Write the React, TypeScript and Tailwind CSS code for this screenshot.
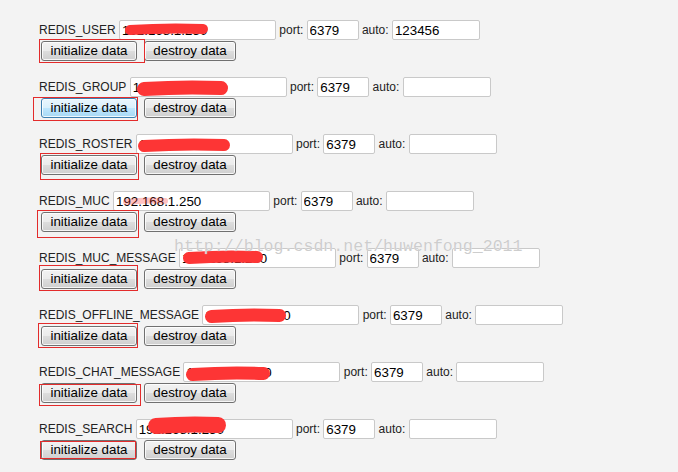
import React from 'react';

type Row = {
  label: string;
  auto?: string;
  // scribble over the host field: x1, x2, yTop, yBottom (relative to the input box)
  scribble: [number, number, number, number];
  faint?: boolean;
  hover?: boolean;
  box: string;
};

const rows: Row[] = [
  { label: 'REDIS_USER', auto: '123456', scribble: [6, 89, 4, 14], box: 'left-0 -top-[2px] w-[106px] h-[24px]' },
  { label: 'REDIS_GROUP', scribble: [7, 98, 4, 18], hover: true, box: '-left-[6px] -top-[1px] w-[105px] h-[24px]' },
  { label: 'REDIS_ROSTER', scribble: [2, 94, 5, 17], box: 'left-[1px] -top-[2px] w-[99px] h-[27px]' },
  { label: 'REDIS_MUC', scribble: [10, 55, 7, 13], faint: true, box: '-left-[2px] -top-[2px] w-[102px] h-[28px]' },
  { label: 'REDIS_MUC_MESSAGE', scribble: [4, 84, 3, 15], box: 'left-0 -top-[4px] w-[99px] h-[26px]' },
  { label: 'REDIS_OFFLINE_MESSAGE', scribble: [3, 84, 4, 17], box: '-left-[1px] -top-[3px] w-[100px] h-[25px]' },
  { label: 'REDIS_CHAT_MESSAGE', scribble: [3, 87, 5, 18], box: 'left-0 top-[1px] w-[102px] h-[22px]' },
  { label: 'REDIS_SEARCH', scribble: [12, 90, -2, 14], box: 'left-[1px] top-[1px] w-[96px] h-[18px]' },
];

// red brush stroke someone drew over the host address
const Scribble: React.FC<{ s: [number, number, number, number]; faint?: boolean }> = ({ s, faint }) => {
  const [x1, x2, y1, y2] = s;
  const t = y2 - y1;
  const ym = (y1 + y2) / 2;
  const a = x1 + t / 2;
  const b = x2 - t / 2;
  return (
    <svg className={`pointer-events-none absolute left-0 top-0 h-[20px] w-full overflow-visible ${faint ? 'opacity-30' : ''}`}>
      <path
        d={`M${a} ${ym + 1} Q${(a + b) / 2} ${ym - 1.5} ${b} ${ym}`}
        fill="none"
        stroke="#fd3535"
        strokeWidth={t}
        strokeLinecap="round"
      />
    </svg>
  );
};

const Field: React.FC<{ w: string; value: string; children?: React.ReactNode }> = ({ w, value, children }) => (
  <div className={`relative h-[20px] shrink-0 ${w}`}>
    <input
      readOnly
      value={value}
      className="h-[20px] w-full rounded-[2px] border border-[#c9c9c9] bg-white pl-[2px] text-[13.33px] leading-[18px] text-black outline-none"
    />
    {children}
  </div>
);

const Btn: React.FC<{ w: string; hover?: boolean; children: React.ReactNode }> = ({ w, hover, children }) => (
  <button
    className={`h-[20px] ${w} rounded-[3px] border text-[13.33px] leading-[18px] text-black ${
      hover
        ? 'border-[#3c7fb1] bg-[linear-gradient(#eaf6fd_0%,#d9f0fc_50%,#bee6fd_51%,#a7d9f5_100%)]'
        : 'border-[#707070] bg-[linear-gradient(#f2f2f2_0%,#ebebeb_50%,#dddddd_51%,#cfcfcf_100%)]'
    } shadow-[inset_0_0_0_1px_rgba(255,255,255,0.8)]`}
  >
    {children}
  </button>
);

export default function App() {
  return (
    <div className="relative min-h-[472px] w-[678px] overflow-hidden bg-[#f3f3f3] pl-[39px] pt-[20px] font-['Liberation_Sans',Arial,sans-serif] text-[#222]">
      {rows.map((r) => (
        <div key={r.label} className="mb-[16px]">
          <div className="flex h-[20px] items-center gap-[3.3px] text-[12px]">
            <span>{r.label}</span>
            <Field w="w-[157px]" value="192.168.1.250">
              <Scribble s={r.scribble} faint={r.faint} />
            </Field>
            <span>port:</span>
            <Field w="w-[52px]" value="6379" />
            <span>auto:</span>
            <Field w="w-[88px]" value={r.auto ?? ''} />
          </div>
          <div className="relative mt-[1px] flex h-[20px] gap-[7px] pl-[2px]">
            <Btn w="w-[96px]" hover={r.hover}>
              initialize data
            </Btn>
            <Btn w="w-[92px]">destroy data</Btn>
            <div className={`pointer-events-none absolute border border-[#e32b2b] ${r.box}`} />
          </div>
        </div>
      ))}

      {/* blog watermark */}
      <div className="pointer-events-none absolute left-[174px] top-[239px] whitespace-nowrap font-['Liberation_Mono',monospace] text-[16.6px] leading-none text-[#cdcdcd] [text-shadow:0_0_1px_#ffffff]">
        http://blog.csdn.net/huwenfong_2011
      </div>
    </div>
  );
}
